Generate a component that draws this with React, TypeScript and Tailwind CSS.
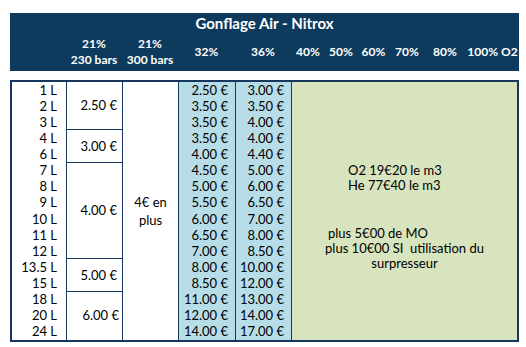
import React from 'react';

const litres = ['1 L', '2 L', '3 L', '4 L', '6 L', '7 L', '8 L', '9 L', '10 L', '11 L', '12 L', '13.5 L', '15 L', '18 L', '20 L', '24 L'];

const nitrox32 = ['2.50 €', '3.50 €', '3.50 €', '3.50 €', '4.00 €', '4.50 €', '5.00 €', '5.50 €', '6.00 €', '6.50 €', '7.00 €', '8.00 €', '8.50 €', '11.00 €', '12.00 €', '14.00 €'];
const nitrox36 = ['3.00 €', '3.50 €', '4.00 €', '4.00 €', '4.40 €', '5.00 €', '6.00 €', '6.50 €', '7.00 €', '8.00 €', '8.50 €', '10.00 €', '12.00 €', '13.00 €', '14.00 €', '17.00 €'];

// prix air 230 bars, regroupés par tranches de bouteilles
const air230 = [
  { price: '2.50 €', cls: 'row-span-3 border-b pr-[5px]' },
  { price: '3.00 €', cls: 'row-span-2 border-b pr-[5px]' },
  { price: '4.00 €', cls: 'row-span-6 border-b pr-[5px]' },
  { price: '5.00 €', cls: 'row-span-2 border-b pr-[5px]' },
  { price: '6.00 €', cls: 'row-span-3 pr-[3px]' },
];

const mixes = ['40%', '50%', '60%', '70%', '80%', '100% O2'];

const App: React.FC = () => {
  return (
    <div className="w-[526px] h-[347px] bg-white pt-[13px] px-[10px] font-['Lato',sans-serif] text-black">
      {/* En-tête */}
      <div className="w-[509px] h-[58px] bg-[#0e3a5d] text-white font-bold flex flex-col">
        <div className="h-[20px] flex items-center justify-center text-[15px] leading-none">Gonflage Air - Nitrox</div>
        <div className="flex-1 grid grid-cols-[56px_56px_56px_57px_56px_34px_32px_33px_34px_42px_1fr] text-[12px] leading-[16.5px]">
          <div />
          <div className="flex flex-col items-center justify-center">
            <span>21%</span>
            <span>230 bars</span>
          </div>
          <div className="flex flex-col items-center justify-center">
            <span>21%</span>
            <span>300 bars</span>
          </div>
          <div className="flex items-center justify-center">32%</div>
          <div className="flex items-center justify-center">36%</div>
          {mixes.map((m) => (
            <div key={m} className="flex items-center justify-center whitespace-nowrap">
              {m}
            </div>
          ))}
        </div>
      </div>

      {/* Tableau des prix */}
      <div className="mt-[9px] w-[509px] h-[262px] border-2 border-[#17375e] flex text-[13px] leading-none">
        <div className="w-[55px] border-r border-[#17375e] grid grid-rows-[repeat(16,16.125px)]">
          {litres.map((l) => (
            <div key={l} className="flex items-center justify-end pr-[9px]">
              {l}
            </div>
          ))}
        </div>

        <div className="w-[56px] border-r border-[#17375e] grid grid-rows-[repeat(16,16.125px)]">
          {air230.map((a) => (
            <div key={a.price} className={`flex items-center justify-end border-[#17375e] ${a.cls}`}>
              {a.price}
            </div>
          ))}
        </div>

        <div className="w-[56px] border-r border-[#17375e] flex flex-col items-center justify-center text-center leading-[18px]">
          <span>4€ en</span>
          <span>plus</span>
        </div>

        <div className="w-[57px] border-r border-[#17375e] bg-[#b7dde8] grid grid-rows-[repeat(16,16.125px)]">
          {nitrox32.map((p, i) => (
            <div key={i} className="flex items-center justify-end pr-[7px]">
              {p}
            </div>
          ))}
        </div>

        <div className="w-[56px] border-r border-[#17375e] bg-[#b7dde8] grid grid-rows-[repeat(16,16.125px)]">
          {nitrox36.map((p, i) => (
            <div key={i} className="flex items-center justify-end pr-[7px]">
              {p}
            </div>
          ))}
        </div>

        <div className="flex-1 bg-[#d7e4bd] flex flex-col pt-[81px] leading-[15px]">
          <div className="pl-[56px]">O2 19€20 le m3</div>
          <div className="pl-[56px]">He 77€40 le m3</div>
          <div className="mt-[33px] pl-[36px]">plus 5€00 de MO</div>
          <div className="text-center whitespace-pre">plus 10€00 SI  utilisation du</div>
          <div className="text-center">surpresseur</div>
        </div>
      </div>
    </div>
  );
};

export default App;
